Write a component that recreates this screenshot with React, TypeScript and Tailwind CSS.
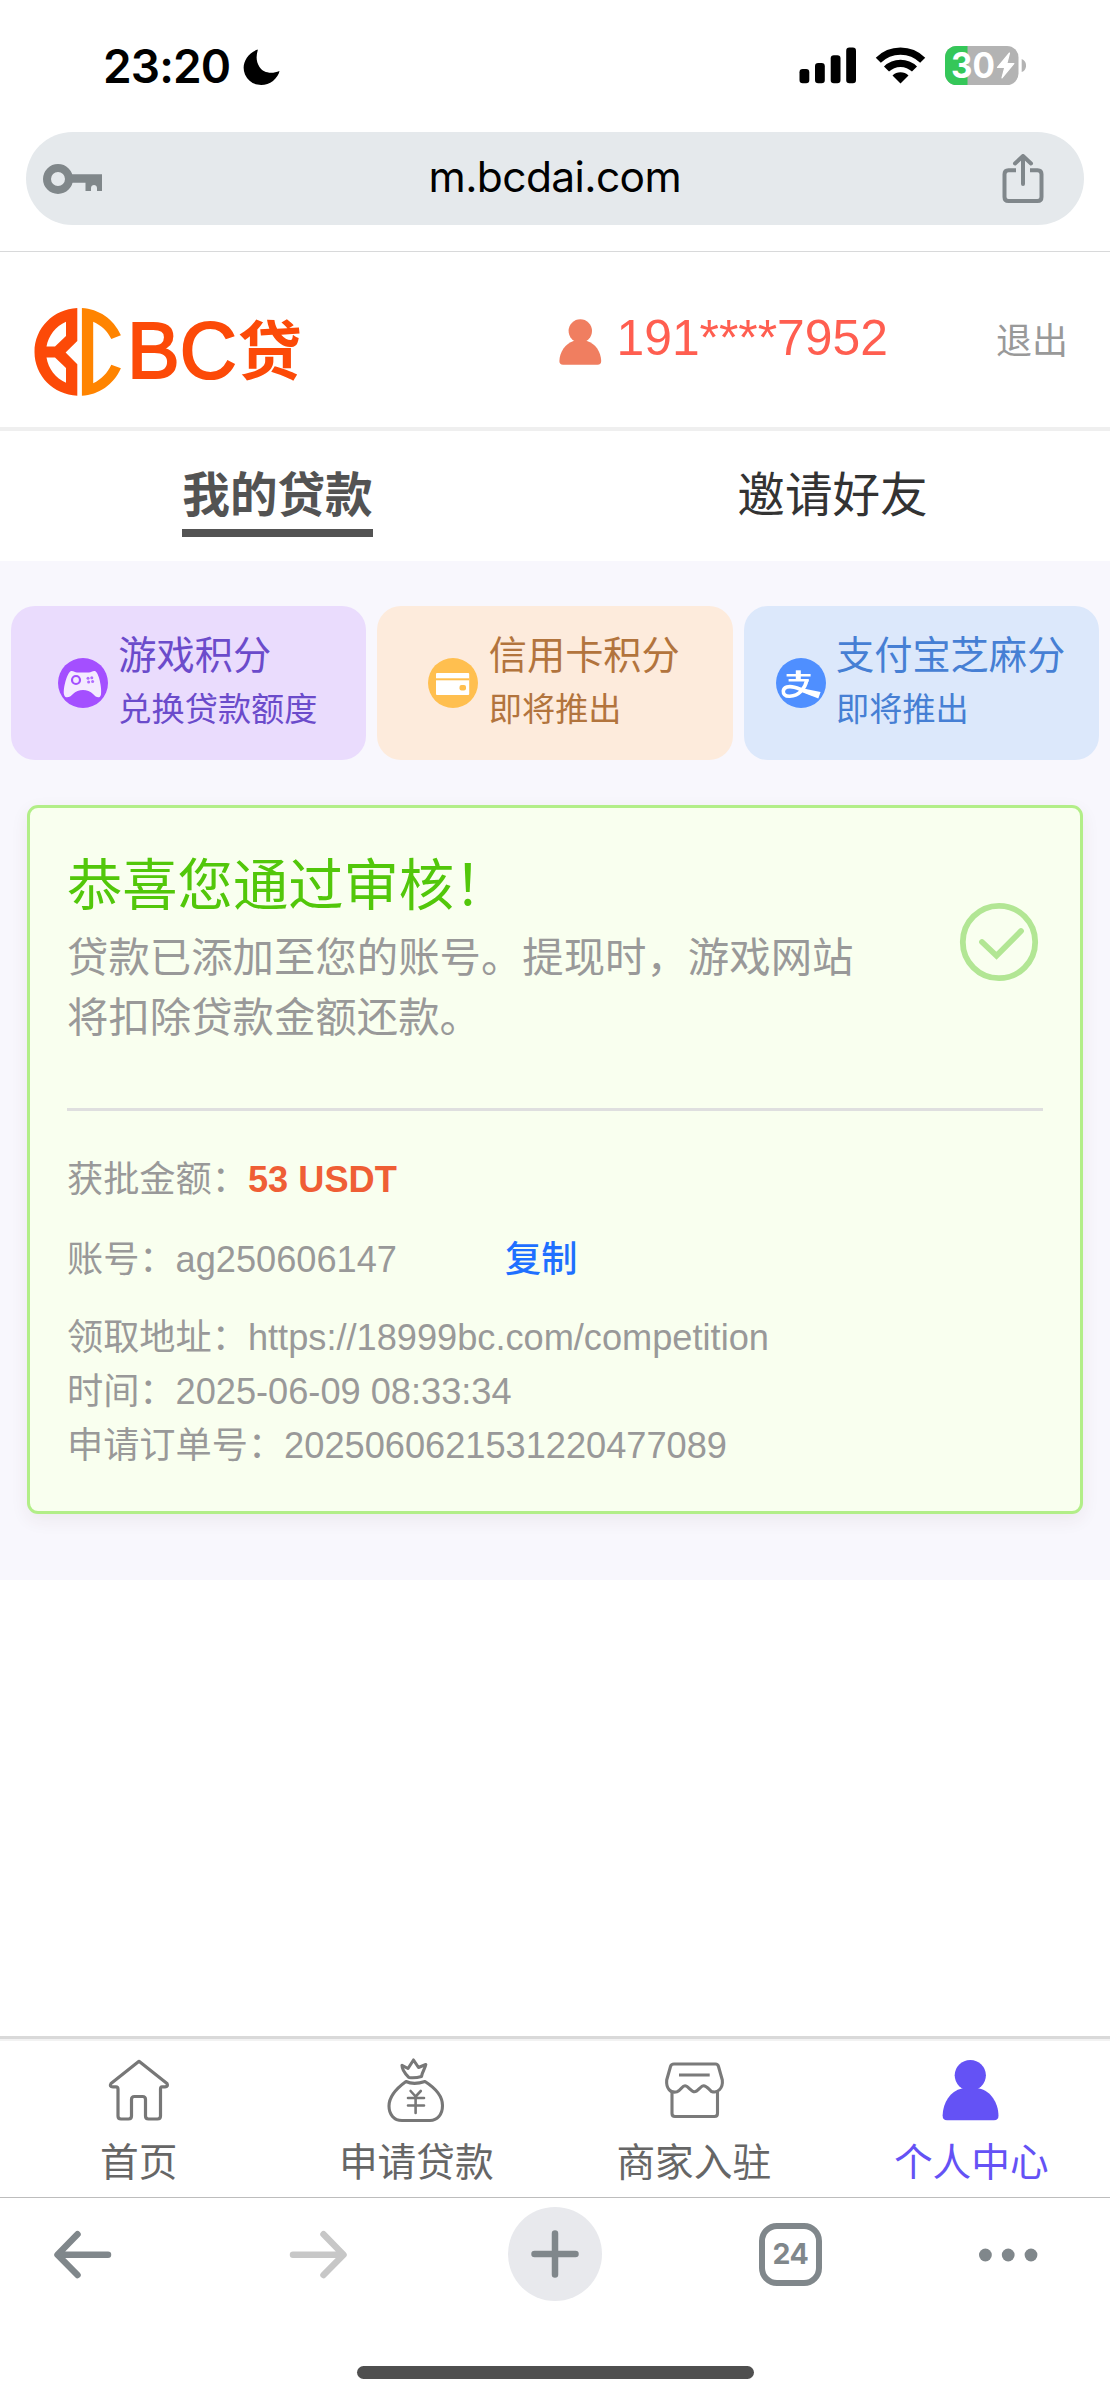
import React from "react";

const sans = "font-['Liberation_Sans','Noto_Sans_CJK_SC',sans-serif]";

function StatusBar() {
  return (
    <div className="flex h-[132px] items-start justify-between pl-[103px] pr-[84px]">
      <div className="flex items-start">
        <span className="mt-[43px] w-[128px] whitespace-nowrap font-[Inter,sans-serif] text-[46px] font-semibold leading-[46px] tracking-[-0.9px] text-black">23:20</span>
        <svg className="ml-[11px] mt-[48px]" width="40" height="38" viewBox="242 48 40 38">
          <path d="M257.500 49.500C246 54 241 65 245 74.500C250 86 264 88 273 81C276.500 78 279 74 279.500 71C271 74.500 263 72.500 259.500 67C256 61.500 256 56 257.800 50Z" fill="#000" />
        </svg>
      </div>
      <div className="mt-[38px] flex items-start">
        <svg width="227" height="56" viewBox="799 38 227 56">
          <rect x="799.500" y="69" width="9.800" height="14.200" rx="3.200" />
          <rect x="815" y="63" width="9.800" height="20.200" rx="3.200" />
          <rect x="830.700" y="55.200" width="9.800" height="28" rx="3.200" />
          <rect x="846.200" y="47.500" width="9.800" height="35.700" rx="3.200" />
          <g fill="none" stroke="#000" strokeWidth="7.200">
            <path d="M878.300 60.300A31.500 31.500 0 0 1 922.700 60.300" />
            <path d="M886.500 69A20 20 0 0 1 914.500 69" />
          </g>
          <path d="M892.500 75.500A11.500 11.500 0 0 1 908.500 75.500L900.500 83.500Z" />
          <clipPath id="cell"><rect x="945" y="46" width="73.500" height="39" rx="11.500" /></clipPath>
          <g clipPath="url(#cell)">
            <rect x="945" y="46" width="74" height="39" fill="#b3b3b3" />
            <rect x="945" y="46" width="22.500" height="39" fill="#35c759" />
          </g>
          <path d="M1021.700 59C1027.500 61 1027.500 70 1021.700 72Z" fill="#b3b3b3" />
          <path d="M1009.500 53L997.500 67.500H1004.800L1002 77.800L1013.800 63.500H1006.800Z" fill="#fff" stroke="#fff" strokeWidth="1.200" strokeLinejoin="round" />
          <text x="951" y="78" fill="#fff" fontFamily="Inter" fontWeight="700" fontSize="35" textLength="44" lengthAdjust="spacingAndGlyphs">30</text>
        </svg>
      </div>
    </div>
  );
}

function AddressBar() {
  return (
    <div className="h-[120px] border-b border-[#d8d9da] px-[26px]">
      <div className="flex h-[93px] items-center justify-between rounded-full bg-[#e5e9ec] pl-[17px] pr-[40px]">
        <svg width="60" height="32" viewBox="43 163 60 32" fill="#80878a">
          <path fillRule="evenodd" d="M58 164a15 15 0 1 0 0 30a15 15 0 1 0 0-30ZM58 172a7 7 0 1 1 0 14a7 7 0 1 1 0-14Z" />
          <path d="M71 174.300H102V191H97V188C97 184 91 184 91 188V191H85.500V182.800H71Z" />
        </svg>
        <span className="mb-[3px] ml-[4px] w-[252px] whitespace-nowrap text-center font-[Inter,sans-serif] text-[42.500px] leading-[50px] tracking-[-0.600px] text-black">m.bcdai.com</span>
        <svg width="42" height="50" viewBox="1002.500 155 42 50" fill="none" stroke="#80878b" strokeWidth="4" strokeLinecap="round" strokeLinejoin="round">
          <path d="M1016.500 171.300H1009Q1005 171.300 1005 175.300V198Q1005 202 1009 202H1038Q1042 202 1042 198V175.300Q1042 171.300 1038 171.300H1030.500" strokeLinecap="butt" />
          <path d="M1023.500 185V158M1015.500 164.500L1023.500 157L1031.500 164.500" />
        </svg>
      </div>
    </div>
  );
}

function SiteHeader() {
  return (
    <header className="flex h-[179px] items-start border-b-4 border-[#efefef] pl-[34px] pr-[42px]">
      <svg className="mt-[56px] shrink-0" width="88" height="88" viewBox="33.500 308 88 88">
        <path fillRule="evenodd" fill="#fc4a08" d="M76.800 308C53 309 34 328 34 352S53 394.700 76.800 395.700V364.300L65.100 352.500L76.800 341ZM65.500 321.700V336L54.500 346.500H46C48 335.500 55 326.500 65.500 321.700ZM46 357.500H54.500L65.500 368V382.700C55 378 48 369 46 357.500Z" />
        <path fill="#ff8400" d="M81.400 308C98 309 113 318.500 120.400 335.300L110.800 339C107 331 101 325.500 92.700 321.700V383.300C101 379 107 373 110.800 364.700L120.400 368.300C113 385 98 395 81.400 395.700Z" />
      </svg>
      <div className={`${sans} ml-[5px] mt-[57px] flex w-[178px] whitespace-nowrap text-[#fc4a08]`}>
        <span className="text-[79px] leading-[84px] [-webkit-text-stroke:2px_#fc4a08]">BC</span>
        <span className="ml-[1px] mt-[2px] text-[64px] font-bold leading-[82px]">贷</span>
      </div>
      <svg className="ml-[254px] mt-[67px] shrink-0" width="43" height="46" viewBox="559.500 319 43 46" fill="#f07e60">
        <circle cx="580.800" cy="331" r="11.700" />
        <path d="M574 341H587.500C596 343.500 601.500 352 601.700 361Q601.700 364.800 598 364.800H563.500Q559.900 364.800 559.900 361C560 352 566 343.500 574 341Z" />
      </svg>
      <span className={`${sans} ml-[14.500px] mt-[57px] text-[49.800px] leading-[58px] text-[#ff5e50]`}>191****7952</span>
      <span className={`${sans} ml-auto mt-[67px] text-[36px] leading-[46px] text-[#999]`}>退出</span>
    </header>
  );
}

function Tabs() {
  return (
    <div className={`${sans} grid h-[130px] grid-cols-2 justify-items-center text-[47.600px] leading-[56px]`}>
      <div className="mt-[37px] h-[69px] border-b-8 border-[#535353] font-bold text-[#535353]">我的贷款</div>
      <div className="mt-[37px] h-[69px] text-[#333]">邀请好友</div>
    </div>
  );
}

function GamepadIcon() {
  return (
    <svg width="50" height="50" viewBox="58 658 50 50">
      <circle cx="83" cy="683" r="25" fill="#a44fff" />
      <path d="M71 671C73 670.500 75 672 77 672.500H89C91 672 93 670.500 95 671C99 673 102 688 101 694.500C100 699 96 697.500 93 694C88 688.500 78 688.500 73 694C70 697.500 65 699 64 694.500C63 688 67 673 71 671Z" fill="#f4eaff" />
      <circle cx="76" cy="680" r="4" fill="none" stroke="#a44fff" strokeWidth="2.200" />
      <g fill="#b06cff">
        <circle cx="88" cy="678.300" r="1.500" />
        <circle cx="91.800" cy="677.800" r="1.500" />
        <circle cx="88.600" cy="682" r="1.500" />
        <circle cx="92.600" cy="681.500" r="1.500" />
      </g>
    </svg>
  );
}

function CardIcon() {
  return (
    <svg width="50" height="50" viewBox="429 658 50 50">
      <circle cx="454" cy="683" r="25" fill="#ffbf4f" />
      <rect x="437" y="673" width="33.200" height="22" rx="1" fill="#fff" />
      <rect x="437" y="678.300" width="33.200" height="2" fill="#ffbf4f" />
      <rect x="460.500" y="685" width="6.500" height="5.500" rx="2" fill="#ffbf4f" />
    </svg>
  );
}

function AlipayIcon() {
  return (
    <svg width="50" height="50" viewBox="775.700 658 50 50" fill="none" stroke="#fff">
      <circle cx="800.700" cy="683" r="25" fill="#4f8fff" stroke="none" />
      <path d="M798 670.300V680" strokeWidth="5" />
      <path d="M786.300 675.300H810.300M788.300 680.200H808.500" strokeWidth="2.600" />
      <path d="M806.500 680.200C805 688 799 695.800 789.500 696.300C784.500 696.500 782.800 693.500 783 691C783.500 687 788.500 685.800 794 687.300C800 689 806 691.500 812 693.800" strokeWidth="3.600" />
      <path d="M803 688.500L820.300 692L818 698.500C812 696 807 694.300 802 692.300Z" fill="#fff" stroke="none" />
    </svg>
  );
}

function ScoreCard({ className, icon, title, note }: { className: string; icon: React.ReactNode; title: string; note: string }) {
  return (
    <div className={`flex h-[154px] items-center justify-center gap-[10.500px] rounded-[24px] pr-[2px] ${className}`}>
      {icon}
      <div className="whitespace-nowrap">
        <div className="text-[38.200px] leading-[52px]">{title}</div>
        <div className="text-[33.200px] leading-[55px]">{note}</div>
      </div>
    </div>
  );
}

function ResultCard() {
  return (
    <section className="mx-[27px] mt-[45px] h-[709px] rounded-[11px] border-[3px] border-[#b2ee88] bg-[#f9ffef] px-[37px] text-[36.200px] text-[#999] shadow-[0_6px_18px_rgba(90,40,40,0.07)]">
      <div className="flex h-[303px] items-start justify-between border-b-[3px] border-[#dfdfdf]">
        <div className="pt-[43px]">
          <div className="text-[55.300px] leading-[70px] text-[#52c70a]">恭喜您通过审核！</div>
          <div className="mt-[7px] whitespace-nowrap text-[41.400px] leading-[60px]">
            贷款已添加至您的账号。提现时，游戏网站
            <br />
            将扣除贷款金额还款。
          </div>
        </div>
        <svg className="mr-[4px] mt-[94px]" width="80" height="80" viewBox="959 902 80 80" fill="none" stroke="#b2e694">
          <circle cx="999" cy="942" r="36.200" strokeWidth="5.800" />
          <path d="M982 942L996.500 955.800L1021 931" strokeWidth="5.800" strokeLinecap="round" />
        </svg>
      </div>
      <div className="mt-[42px] leading-[54.500px]">
        获批金额：<b className="text-[#ef5e35]">53 USDT</b>
      </div>
      <div className="mt-[25px] flex leading-[54.500px]">
        <span className="w-[438px]">账号：ag250606147</span>
        <span className="font-medium text-[#1f70ff]">复制</span>
      </div>
      <div className="mt-[23.500px] leading-[54.300px]">
        <div>领取地址：https://18999bc.com/competition</div>
        <div>时间：2025-06-09 08:33:34</div>
        <div>申请订单号：2025060621531220477089</div>
      </div>
    </section>
  );
}

function HomeIcon() {
  return (
    <svg width="66" height="66" viewBox="106 2057 66 66" fill="none" stroke="#777" strokeWidth="3.200" strokeLinejoin="round">
      <path d="M139 2061.300L167 2083.500Q168.500 2086.700 165 2086.800H162Q160.500 2086.800 160.500 2089V2116Q160.500 2119 157.500 2119H148.500Q145.500 2119 145.500 2116V2099.500Q145.500 2096.500 142.500 2096.500H134.500Q131.500 2096.500 131.500 2099.500V2116Q131.500 2119 128.500 2119H121Q118 2119 118 2116V2089Q118 2086.800 116 2086.800H113Q109 2086.700 111 2083.500Z" />
    </svg>
  );
}

function LoanIcon() {
  return (
    <svg width="66" height="66" viewBox="383 2057 66 66" fill="none" stroke="#777" strokeWidth="3.100" strokeLinejoin="round" strokeLinecap="round">
      <path d="M402 2065.300L408 2068.500L413.500 2060L418.500 2067.500L425.800 2064.500C425 2069 422 2072 421.500 2076.500C417 2077.800 413 2078 409 2077.500C406 2074.500 402 2071 402 2065.300Z" />
      <path d="M406 2081.500C412 2084.500 419 2083.500 425 2081.500C436 2088.500 442.500 2096 442.500 2105.500C442.500 2115 437 2120.500 430 2120.500H402C394 2120.500 389 2114.500 389 2106C389 2097 397 2088 406 2081.500Z" />
      <path d="M410.600 2091L415.600 2096.500L420.800 2091M415.600 2097V2113M408 2098H424M408 2105.500H424" strokeWidth="2.600" />
    </svg>
  );
}

function ShopIcon() {
  return (
    <svg width="66" height="66" viewBox="661 2057 66 66" fill="none" stroke="#7a7a7a" strokeWidth="3.100" strokeLinejoin="round">
      <path d="M674 2064H715.500Q717.800 2064 718.500 2066.500L722.300 2080C723.200 2088 718 2093.500 711.500 2091.500C708 2088.500 706.500 2085.800 703.700 2085.800C700.500 2085.800 698 2091.800 694.500 2091.800C691 2091.800 688 2085.800 685 2085.800C682 2085.800 681 2090.500 677 2091.800C670 2093.300 666 2088 666.700 2080L670.500 2066.500Q671.200 2064 674 2064Z" />
      <path d="M672 2091V2113.500Q672 2116.500 675 2116.500H714.500Q717.500 2116.500 717.500 2113.500V2091M679 2075H709.700" />
    </svg>
  );
}

function PersonIcon() {
  return (
    <svg width="66" height="66" viewBox="938 2057 66 66" fill="#6452f5">
      <ellipse cx="970.300" cy="2075.300" rx="15.600" ry="15.400" />
      <path d="M962 2088.500H979C991 2091 998.200 2103 998.500 2115.500Q998.500 2120.200 994 2120.200H947Q942.600 2120.200 942.600 2115.500C943 2103 950 2091 962 2088.500Z" />
    </svg>
  );
}

function NavItem({ icon, label, active }: { icon: React.ReactNode; label: string; active?: boolean }) {
  return (
    <div className={`flex flex-col items-center whitespace-nowrap pt-[18px] text-[38.700px] leading-[50px] ${active ? "text-[#6452f5]" : "text-[#666]"}`}>
      {icon}
      <span className="mt-[14.500px]">{label}</span>
    </div>
  );
}

function BrowserToolbar() {
  return (
    <div className="flex h-[168px] items-start pl-[53px] pt-[9px]">
      <svg className="mt-[23px] shrink-0" width="60" height="50" viewBox="53 2230 60 50" fill="none" stroke="#80878b" strokeWidth="6.500" strokeLinecap="round" strokeLinejoin="round">
        <path d="M108 2254.700H58M77.500 2234.300L57.500 2254.700L77.500 2275" />
      </svg>
      <svg className="ml-[175px] mt-[23px] shrink-0" width="60" height="50" viewBox="288 2230 60 50" fill="none" stroke="#c7c7c7" strokeWidth="6.500" strokeLinecap="round" strokeLinejoin="round">
        <path d="M293 2254.700H343M323.500 2234.300L343.500 2254.700L323.500 2275" />
      </svg>
      <span className="ml-[160px] flex size-[94px] shrink-0 items-center justify-center rounded-full bg-[#e8e9ed]">
        <svg width="50" height="50" viewBox="0 0 50 50" fill="none" stroke="#80878b" strokeWidth="6.500" strokeLinecap="round">
          <path d="M4.500 25H45.500M25 4.500V45.500" />
        </svg>
      </span>
      <span className="ml-[157px] mt-[16px] flex size-[63px] shrink-0 items-center justify-center rounded-[18px] border-[6px] border-[#80878b] font-[Inter,sans-serif] text-[28.500px] font-bold leading-none tracking-[-0.5px] text-[#80878b]">24</span>
      <svg className="ml-[156px] mt-[41px] shrink-0" width="60" height="14" viewBox="978 2247.700 60 14" fill="#80878b">
        <circle cx="985.400" cy="2254.700" r="6.400" />
        <circle cx="1008.200" cy="2254.700" r="6.400" />
        <circle cx="1031" cy="2254.700" r="6.400" />
      </svg>
    </div>
  );
}

export default function App() {
  return (
    <div className="flex h-[2400px] w-[1110px] flex-col overflow-hidden bg-white">
      <StatusBar />
      <AddressBar />
      <SiteHeader />
      <Tabs />
      <main className={`${sans} h-[1019px] bg-[#f8f7fd] pt-[45px]`}>
        <div className="grid grid-cols-3 gap-[11px] px-[11px]">
          <ScoreCard className="bg-[#eadcfd] text-[#6b4bcb]" icon={<GamepadIcon />} title="游戏积分" note="兑换贷款额度" />
          <ScoreCard className="bg-[#fdebdc] text-[#b2743d]" icon={<CardIcon />} title="信用卡积分" note="即将推出" />
          <ScoreCard className="bg-[#dce8fb] text-[#467fd4]" icon={<AlipayIcon />} title="支付宝芝麻分" note="即将推出" />
        </div>
        <ResultCard />
      </main>
      <nav className={`${sans} mt-auto grid h-[162px] grid-cols-4 border-b border-t-[3px] border-b-[#bdbdbd] border-t-[#d9d9d9] shadow-[inset_0_2px_0_#f2f2f2]`}>
        <NavItem icon={<HomeIcon />} label="首页" />
        <NavItem icon={<LoanIcon />} label="申请贷款" />
        <NavItem icon={<ShopIcon />} label="商家入驻" />
        <NavItem icon={<PersonIcon />} label="个人中心" active />
      </nav>
      <BrowserToolbar />
      <div className="mx-auto mb-[21px] h-[13px] w-[397px] shrink-0 rounded-full bg-[#4f4f4f]" />
    </div>
  );
}
